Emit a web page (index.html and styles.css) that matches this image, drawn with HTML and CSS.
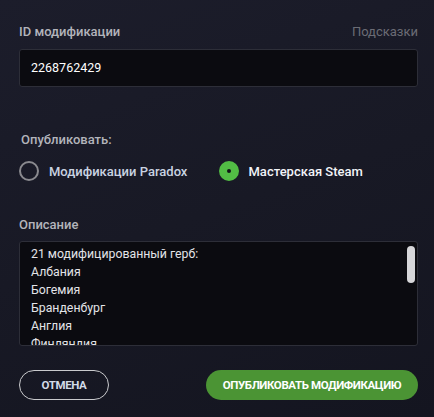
FILE: index.html
```html
<!DOCTYPE html>
<html lang="ru">
<head>
<meta charset="utf-8">
<link rel="stylesheet" href="styles.css">
</head>
<body>
<div class="panel">
  <div class="label-row">
    <span class="label">ID модификации</span>
    <span class="hint">Подсказки</span>
  </div>
  <div class="input">2268762429</div>

  <div class="label publish-label">Опубликовать:</div>
  <div class="radios">
    <div class="radio">
      <span class="circle"></span>
      <span class="radio-text">Модификации Paradox</span>
    </div>
    <div class="radio checked">
      <span class="circle"></span>
      <span class="radio-text">Мастерская Steam</span>
    </div>
  </div>

  <div class="label desc-label">Описание</div>
  <div class="textarea">
    <div class="lines">
      <div>21 модифицированный герб:</div>
      <div>Албания</div>
      <div>Богемия</div>
      <div>Бранденбург</div>
      <div>Англия</div>
      <div>Финляндия</div>
    </div>
    <span class="thumb"></span>
  </div>

  <div class="buttons">
    <button class="btn cancel">ОТМЕНА</button>
    <button class="btn publish">ОПУБЛИКОВАТЬ МОДИФИКАЦИЮ</button>
  </div>
</div>
</body>
</html>
```
FILE: styles.css
```css
html, body {
  margin: 0;
  padding: 0;
}
body {
  width: 434px;
  height: 417px;
  overflow: hidden;
  background: linear-gradient(160deg, #1c1d2b 0%, #181925 50%, #141520 100%);
  font-family: Roboto, "Noto Sans", sans-serif;
}
.panel {
  display: flex;
  flex-direction: column;
  padding: 24px 16px 0 19px;
}
.label-row {
  display: flex;
  justify-content: space-between;
  align-items: center;
  height: 16px;
}
.label {
  font-size: 13px;
  font-weight: 500;
  color: #b3b4bb;
  line-height: 16px;
}
.hint {
  font-size: 13px;
  color: #6b6c75;
  line-height: 16px;
}
.input {
  margin-top: 9px;
  height: 36px;
  border: 1px solid #2d2e38;
  border-radius: 3px;
  background: #0b0b10;
  color: #ffffff;
  font-size: 12.5px;
  line-height: 36px;
  padding-left: 11px;
}
.publish-label {
  margin-top: 45px;
  margin-left: 2px;
}
.radios {
  display: flex;
  align-items: center;
  margin-top: 13px;
  height: 20px;
}
.radio {
  display: flex;
  align-items: center;
  width: 200px;
}
.circle {
  width: 16px;
  height: 16px;
  border: 2px solid #8a8a8f;
  border-radius: 50%;
  position: relative;
  flex: none;
}
.checked .circle {
  border-color: #52bd45;
  background: #52bd45;
}
.checked .circle::after {
  content: "";
  position: absolute;
  left: 6px;
  top: 6px;
  width: 4px;
  height: 4px;
  border-radius: 50%;
  background: #111319;
}
.radio-text {
  margin-left: 10px;
  font-size: 13px;
  font-weight: 500;
  color: #c9d3e1;
}
.checked .radio-text {
  color: #f2f4f8;
}
.desc-label {
  margin-top: 36px;
}
.textarea {
  position: relative;
  margin-top: 8px;
  height: 103px;
  border: 1px solid #2d2e38;
  border-radius: 3px;
  background: #0b0b10;
  overflow: hidden;
}
.lines {
  padding: 3px 0 0 11px;
  font-size: 12.3px;
  line-height: 18px;
  color: #e3e4e8;
}
.thumb {
  position: absolute;
  right: 2px;
  top: 4px;
  width: 8px;
  height: 37px;
  border-radius: 4px;
  background: #d6d6d9;
}
.buttons {
  display: flex;
  justify-content: space-between;
  margin-top: 24px;
}
.btn {
  height: 30px;
  border-radius: 15px;
  font-family: Roboto, "Noto Sans", sans-serif;
  font-size: 11.5px;
  font-weight: 700;
  letter-spacing: -0.4px;
  padding: 0;
  cursor: pointer;
}
.cancel {
  width: 90px;
  background: transparent;
  border: 1px solid #c9cacd;
  color: #d3dbe8;
}
.publish {
  width: 212px;
  background: #4b9434;
  border: none;
  color: #ffffff;
}
```
